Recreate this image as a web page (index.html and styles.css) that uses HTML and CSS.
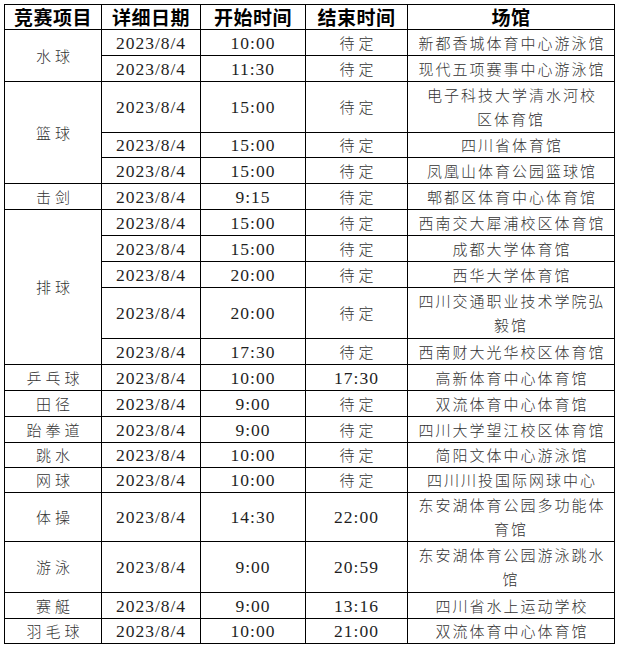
FILE: index.html
```html
<!DOCTYPE html>
<html lang="zh-CN">
<head>
<meta charset="utf-8">
<title>赛程表</title>
<link rel="stylesheet" href="styles.css">
</head>
<body>
<table class="sched">
  <colgroup>
    <col class="c-sport"><col class="c-date"><col class="c-start"><col class="c-end"><col class="c-venue">
  </colgroup>
  <thead>
    <tr class="h25">
      <th>竞赛项目</th><th>详细日期</th><th>开始时间</th><th>结束时间</th><th>场馆</th>
    </tr>
  </thead>
  <tbody>
    <tr class="h26"><td class="sport" rowspan="2">水球</td><td class="num">2023/8/4</td><td class="num">10:00</td><td class="end">待定</td><td class="venue">新都香城体育中心游泳馆</td></tr>
    <tr class="h26"><td class="num">2023/8/4</td><td class="num">11:30</td><td class="end">待定</td><td class="venue">现代五项赛事中心游泳馆</td></tr>

    <tr class="h51"><td class="sport" rowspan="3">篮球</td><td class="num">2023/8/4</td><td class="num">15:00</td><td class="end">待定</td><td class="venue">电子科技大学清水河校<br>区体育馆</td></tr>
    <tr class="h25"><td class="num">2023/8/4</td><td class="num">15:00</td><td class="end">待定</td><td class="venue">四川省体育馆</td></tr>
    <tr class="h26"><td class="num">2023/8/4</td><td class="num">15:00</td><td class="end">待定</td><td class="venue">凤凰山体育公园篮球馆</td></tr>

    <tr class="h26"><td class="sport">击剑</td><td class="num">2023/8/4</td><td class="num">9:15</td><td class="end">待定</td><td class="venue">郫都区体育中心体育馆</td></tr>

    <tr class="h26"><td class="sport" rowspan="5">排球</td><td class="num">2023/8/4</td><td class="num">15:00</td><td class="end">待定</td><td class="venue">西南交大犀浦校区体育馆</td></tr>
    <tr class="h26"><td class="num">2023/8/4</td><td class="num">15:00</td><td class="end">待定</td><td class="venue">成都大学体育馆</td></tr>
    <tr class="h26"><td class="num">2023/8/4</td><td class="num">20:00</td><td class="end">待定</td><td class="venue">西华大学体育馆</td></tr>
    <tr class="h51"><td class="num">2023/8/4</td><td class="num">20:00</td><td class="end">待定</td><td class="venue">四川交通职业技术学院弘<br>毅馆</td></tr>
    <tr class="h26"><td class="num">2023/8/4</td><td class="num">17:30</td><td class="end">待定</td><td class="venue">西南财大光华校区体育馆</td></tr>

    <tr class="h26"><td class="sport">乒乓球</td><td class="num">2023/8/4</td><td class="num">10:00</td><td class="num">17:30</td><td class="venue">高新体育中心体育馆</td></tr>
    <tr class="h26"><td class="sport">田径</td><td class="num">2023/8/4</td><td class="num">9:00</td><td class="end">待定</td><td class="venue">双流体育中心体育馆</td></tr>
    <tr class="h26"><td class="sport">跆拳道</td><td class="num">2023/8/4</td><td class="num">9:00</td><td class="end">待定</td><td class="venue">四川大学望江校区体育馆</td></tr>
    <tr class="h25"><td class="sport">跳水</td><td class="num">2023/8/4</td><td class="num">10:00</td><td class="end">待定</td><td class="venue">简阳文体中心游泳馆</td></tr>
    <tr class="h25"><td class="sport">网球</td><td class="num">2023/8/4</td><td class="num">10:00</td><td class="end">待定</td><td class="venue">四川川投国际网球中心</td></tr>

    <tr class="h49"><td class="sport">体操</td><td class="num">2023/8/4</td><td class="num">14:30</td><td class="num">22:00</td><td class="venue">东安湖体育公园多功能体<br>育馆</td></tr>
    <tr class="h51"><td class="sport">游泳</td><td class="num">2023/8/4</td><td class="num">9:00</td><td class="num">20:59</td><td class="venue">东安湖体育公园游泳跳水<br>馆</td></tr>
    <tr class="h26"><td class="sport">赛艇</td><td class="num">2023/8/4</td><td class="num">9:00</td><td class="num">13:16</td><td class="venue">四川省水上运动学校</td></tr>
    <tr class="h25"><td class="sport">羽毛球</td><td class="num">2023/8/4</td><td class="num">10:00</td><td class="num">21:00</td><td class="venue">双流体育中心体育馆</td></tr>
  </tbody>
</table>
</body>
</html>
```

FILE: styles.css
```css
html, body {
  margin: 0;
  padding: 0;
  background: #ffffff;
}

body {
  padding: 4px 0 0 4px;
  font-family: "Liberation Serif", "Noto Sans CJK SC", serif;
  color: #222222;
}

.sched {
  border-collapse: collapse;
  table-layout: fixed;
  width: 610px;
}

.c-sport { width: 97px; }
.c-date  { width: 99px; }
.c-start { width: 105px; }
.c-end   { width: 102px; }
.c-venue { width: 207px; }

.sched th,
.sched td {
  border: 1px solid #000000;
  padding: 0;
  text-align: center;
  vertical-align: middle;
  white-space: nowrap;
  overflow: hidden;
}

.sched th {
  font-family: "Noto Sans CJK SC", sans-serif;
  font-weight: 700;
  font-size: 19px;
  letter-spacing: 0.5px;
  line-height: 22px;
  color: #000000;
}

.h25 { height: 25px; }
.h26 { height: 26px; }
.h49 { height: 49px; }
.h51 { height: 51px; }

.num {
  font-family: "Liberation Serif", serif;
  font-size: 17.5px;
  letter-spacing: 1px;
  line-height: 20px;
  padding-top: 3px;
  color: #1e1e1e;
}

.sport,
.end {
  font-family: "Noto Sans CJK SC", sans-serif;
  font-weight: 300;
  font-size: 15px;
  letter-spacing: 4px;
  text-indent: 4px;
  line-height: 20px;
  padding-top: 2px;
  color: #333333;
}

.venue {
  font-family: "Noto Sans CJK SC", sans-serif;
  font-weight: 300;
  font-size: 15px;
  letter-spacing: 2px;
  text-indent: 2px;
  line-height: 24px;
  padding-top: 2px;
  color: #333333;
}
```
